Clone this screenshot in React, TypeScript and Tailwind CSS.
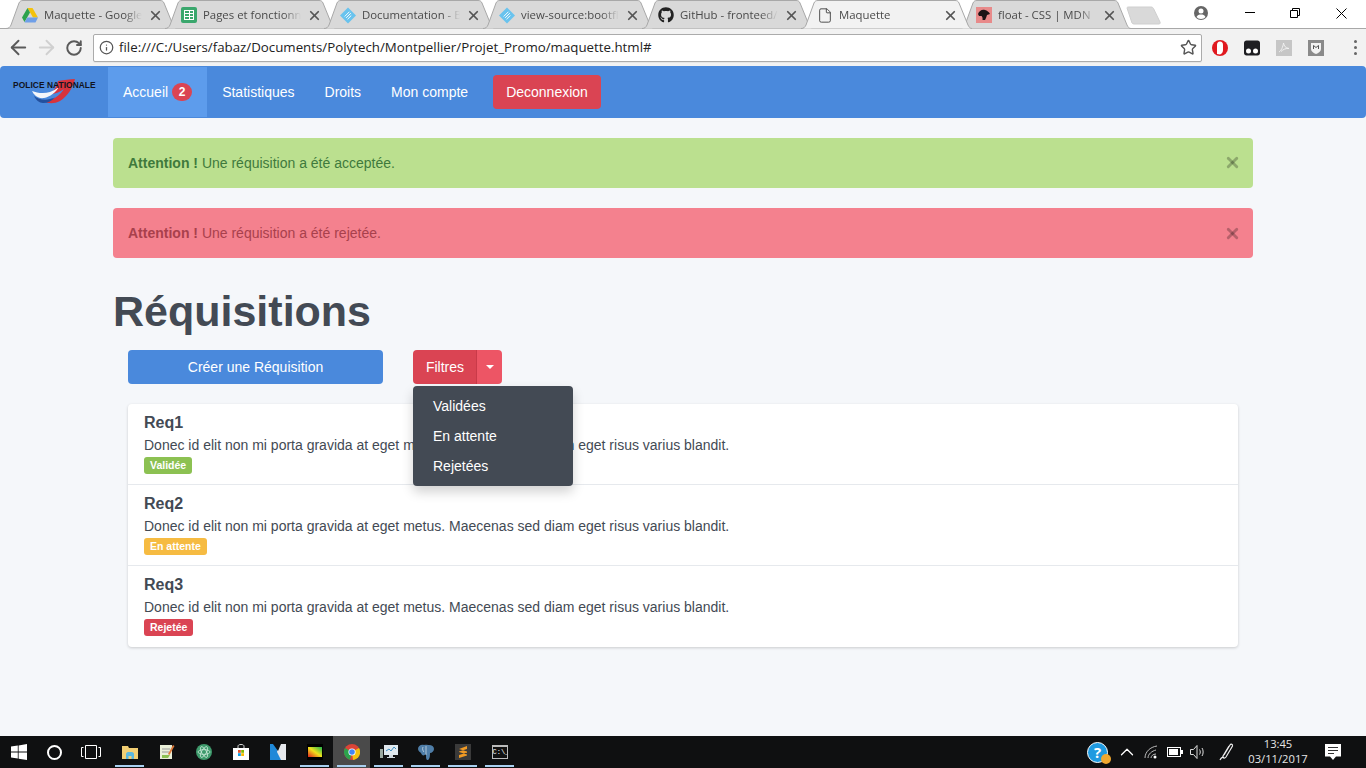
import React from 'react';
import { ArrowLeft, ArrowRight, ChevronUp, File, Info, RotateCw, Star, X } from 'lucide-react';
import { FaGithub } from 'react-icons/fa';

const DriveIcon = () => (
  <svg width="16" height="15" viewBox="0 0 16 15">
    <path d="M5.5 0h5l5.5 9.500h-5z" fill="#f4c20d" />
    <path d="M5.500 0L0 9.500l2.500 4.500L8 4.500z" fill="#2ba24c" />
    <path d="M2.500 14.500h11l2.500-5H5.300z" fill="#6f9fe8" />
  </svg>
);

const SheetsIcon = () => (
  <div className="w-4 h-4 rounded-[2px] bg-[#3aa76d] flex items-center justify-center">
    <div className="w-[10px] h-[10px] border border-white grid grid-cols-2 grid-rows-3 gap-px bg-white">
      <span className="bg-[#3aa76d]" />
      <span className="bg-[#3aa76d]" />
      <span className="bg-[#3aa76d]" />
      <span className="bg-[#3aa76d]" />
      <span className="bg-[#3aa76d]" />
      <span className="bg-[#3aa76d]" />
    </div>
  </div>
);

const DocsIcon = () => (
  <svg width="17" height="17" viewBox="0 0 17 17">
    <path d="M8.5 0L17 8.500 8.500 17 0 8.500z" fill="#69c3ee" />
    <path d="M5 9.500l5-5M6.500 11l5-5M8 12.500l4-4" stroke="#fff" strokeWidth="1" />
  </svg>
);

const MdnIcon = () => (
  <div className="w-4 h-4 bg-[#e88a8a] flex items-center justify-center">
    <svg width="14" height="14" viewBox="0 0 14 14">
      <path d="M1 6c1-3 4-5 7-4 2 .5 4 2 5 4l-3 1c-.5 2-1 3-2 5H5.500c.3-1.500 0-3-1-4L2 8z" fill="#1c1416" />
    </svg>
  </div>
);

type TabProps = { title: string; icon: React.ReactNode; active?: boolean };

const Tab: React.FC<TabProps> = ({ title, icon, active }) => (
  <div className={`relative w-[171px] h-[29px] -ml-[12px] first:ml-[6px] shrink-0 ${active ? 'z-10' : ''}`}>
    <svg className="absolute inset-0" width="171" height="29" viewBox="0 0 171 29">
      <path
        d="M0 28.500C3 28.500 4 27 5 25L13 3C14 1 15 .5 17 .5H154C156 .5 157 1 158 3L167 25C168 27 169 28.500 171 28.500"
        fill={active ? '#f2f2f2' : '#d9d9d9'}
        stroke="#a8a8a8"
      />
    </svg>
    <div className="absolute left-[16px] top-[7px] w-4 h-4 flex items-center justify-center">{icon}</div>
    <div className="absolute left-[38px] top-[6px] w-[98px] overflow-hidden whitespace-nowrap font-['Open_Sans',sans-serif] text-[11.4px] leading-[18px] text-[#4a4a4a] [mask-image:linear-gradient(to_right,black_82%,transparent)]">
      {title}
    </div>
    <X className="absolute left-[142px] top-[8px] text-[#555]" size={15} strokeWidth={2.8} />
  </div>
);

const TabStrip = () => (
  <div className="relative h-[29px] flex bg-white border-b border-[#a8a8a8] shrink-0">
    <Tab title="Maquette - Google Drive" icon={<DriveIcon />} />
    <Tab title="Pages et fonctionnalités" icon={<SheetsIcon />} />
    <Tab title="Documentation - Bootstrap" icon={<DocsIcon />} />
    <Tab title="view-source:bootflat.github" icon={<DocsIcon />} />
    <Tab title="GitHub - fronteed/icheck" icon={<FaGithub size={16} className="text-[#222]" />} />
    <Tab title="Maquette" icon={<File size={17} strokeWidth={1.4} className="text-[#444]" />} active />
    <Tab title="float - CSS | MDN" icon={<MdnIcon />} />
    <svg className="-ml-[5px] mt-[6px] shrink-0" width="36" height="19" viewBox="0 0 36 19">
      <path d="M1 2C1 1 2 1 3 1H25C26 1 27 1.500 27.500 2.500L34 16C34.500 17 34 18 33 18H8C7 18 6.500 17.500 6 17z" fill="#d9d9d9" stroke="#cfcfcf" />
    </svg>
    <div className="ml-auto flex items-start">
      <div className="w-[28px] h-[28px] flex items-center justify-center mr-[11px] -mt-px">
        <svg width="14" height="14" viewBox="0 0 14 14">
          <circle cx="7" cy="7" r="7" fill="#666" />
          <circle cx="7" cy="5" r="2.500" fill="#fff" />
          <path d="M2.500 11c1-2 2.500-2.500 4.500-2.500s3.500.5 4.500 2.500c-1 1.200-2.500 2-4.500 2s-3.500-.8-4.500-2z" fill="#fff" />
        </svg>
      </div>
      <div className="w-[48px] h-[28px] flex items-center justify-center -mt-[2px]">
        <div className="w-[10px] h-px bg-black" />
      </div>
      <div className="w-[42px] h-[28px] flex items-center justify-center -mt-px">
        <svg width="10" height="10" viewBox="0 0 10 10" fill="none" stroke="#000">
          <path d="M.5 2.500h7v7h-7zM2.500 2.500v-2h7v7h-2" />
        </svg>
      </div>
      <div className="w-[50px] h-[28px] flex items-center justify-center -mt-px">
        <svg width="11" height="11" viewBox="0 0 11 11" stroke="#000">
          <path d="M.5.500l10 10M10.500.5l-10 10" />
        </svg>
      </div>
    </div>
  </div>
);

const Toolbar = () => (
  <div className="h-[37px] bg-[#f2f2f2] flex items-center shrink-0">
    <div className="w-[93px] flex items-center pl-[4px]">
      <div className="w-[28px] flex justify-center">
        <ArrowLeft size={23} strokeWidth={2} className="text-[#5a5a5a]" />
      </div>
      <div className="w-[28px] flex justify-center">
        <ArrowRight size={23} strokeWidth={2} className="text-[#d0d0d0]" />
      </div>
      <div className="w-[28px] flex justify-center">
        <RotateCw size={18} strokeWidth={2.6} className="text-[#5a5a5a]" />
      </div>
    </div>
    <div className="w-[1109px] h-[28px] bg-white border border-[#ababab] rounded-[2px] flex items-center shadow-[0_1px_0_#e6e6e6]">
      <Info size={15} strokeWidth={2} className="ml-[5px] text-[#555]" />
      <span className="ml-[5px] font-['Open_Sans',sans-serif] text-[13.3px] text-[#222] whitespace-nowrap">
        file:///C:/Users/fabaz/Documents/Polytech/Montpellier/Projet_Promo/maquette.html#
      </span>
      <Star size={17} strokeWidth={2} className="ml-auto mr-[4px] text-[#555]" />
    </div>
    <div className="flex-1 flex items-center pl-[10px] gap-[16px]">
      <svg width="16" height="16" viewBox="0 0 16 16">
        <circle cx="8" cy="8" r="8" fill="#e0191f" />
        <path d="M5 14V5c0-2 1-3.500 3-3.500S11 3 11 5v5c0 2-1 4-3 4.500z" fill="#fff" />
      </svg>
      <svg width="16" height="16" viewBox="0 0 16 16">
        <path d="M0 3c0-1.500 1-2.500 2.500-2.500h11C15 .5 16 1.500 16 3v10c0 1.500-1 2.500-2.500 2.500h-11C1 15.500 0 14.500 0 13z" fill="#1e1e22" />
        <circle cx="4.500" cy="11" r="2.500" fill="#fff" />
        <circle cx="11.500" cy="11" r="2.500" fill="#fff" />
      </svg>
      <svg width="16" height="16" viewBox="0 0 16 16">
        <rect width="16" height="16" fill="#c6c6c6" />
        <path d="M3 12c2-1 4-5 4.500-9 .5 3 2 5 5.500 5.500-3-.5-6 1-8 3" fill="none" stroke="#f2f2f2" strokeWidth="1" />
      </svg>
      <svg width="16" height="16" viewBox="0 0 16 16">
        <rect width="16" height="16" fill="#8a8a8a" />
        <path d="M3 3h10v6c0 2.500-2.500 4-5 5-2.500-1-5-2.500-5-5z" fill="#f2f2f2" />
        <path d="M5.500 9V5.500L8 7.500l2.500-2V9" fill="none" stroke="#555" strokeWidth="1" />
      </svg>
      <div className="flex flex-col gap-[3px] ml-[14px]">
        <span className="w-[3px] h-[3px] rounded-full bg-[#666]" />
        <span className="w-[3px] h-[3px] rounded-full bg-[#666]" />
        <span className="w-[3px] h-[3px] rounded-full bg-[#666]" />
      </div>
    </div>
  </div>
);

const Logo = () => (
  <div className="relative w-[108px] h-[52px] shrink-0">
    <svg className="absolute left-[30px] top-[13px]" width="46" height="25" viewBox="0 0 46 25">
      <path d="M28 2c6-1 12-2 17-2-2 8-7 17-15 22-6 3-12 3-16 0 9 0 16-6 20-12-4 3-9 5-14 5 4-3 7-8 8-13z" fill="#d8333c" />
      <path d="M2 12c5 2 12 3 18 1 3-1 6-3 9-5-3 5-9 10-15 11-6 1-10-3-12-7z" fill="#f4f6fa" />
      <path d="M4 17c4 3 10 5 16 3 2-.5 4-1 5-2-3 4-7 6-12 6-4 0-7-3-9-7z" fill="#23509e" />
    </svg>
    <span className="absolute left-[13px] top-[14px] font-['Liberation_Sans',sans-serif] font-bold text-[8.4px] leading-[10px] tracking-[0.06px] whitespace-nowrap text-[#10131c]">
      POLICE NATIONALE
    </span>
  </div>
);

const NavLink: React.FC<{ children: React.ReactNode; active?: boolean }> = ({ children, active }) => (
  <a href="#" className={`h-[50px] flex items-center px-[15px] text-white ${active ? 'bg-[#5d9cec]' : ''}`}>
    {children}
  </a>
);

const Navbar = () => (
  <nav className="h-[52px] bg-[#4a89dc] rounded-[4px] flex items-center shrink-0">
    <Logo />
    <NavLink active>
      Accueil
      <span className="ml-[4px] w-[20px] h-[18px] rounded-full bg-[#da4453] text-[12px] font-bold leading-[18px] text-center">2</span>
    </NavLink>
    <NavLink>Statistiques</NavLink>
    <NavLink>Droits</NavLink>
    <NavLink>Mon compte</NavLink>
    <button className="ml-[10px] h-[34px] px-[13px] rounded-[4px] bg-[#da4453] text-white">Deconnexion</button>
  </nav>
);

const Alert: React.FC<{ className: string; message: string; closeClass: string }> = ({ className, message, closeClass }) => (
  <div className={`h-[50px] mb-[20px] rounded-[4px] flex items-center justify-between pl-[15px] pr-[12px] ${className}`}>
    <p>
      <strong>Attention !</strong> {message}
    </p>
    <X size={17} strokeWidth={4} className={closeClass} />
  </div>
);

const badges = {
  ok: 'bg-[#8cc152]',
  wait: 'bg-[#f6bb42]',
  no: 'bg-[#da4453]',
};

const requisitions = [
  { name: 'Req1', status: 'Validée', color: badges.ok },
  { name: 'Req2', status: 'En attente', color: badges.wait },
  { name: 'Req3', status: 'Rejetée', color: badges.no },
];

const RequisitionList = () => (
  <div className="mt-[20px] bg-white rounded-[4px] shadow-[0_1px_3px_rgba(0,0,0,0.18)] divide-y divide-[#e6e9ed]">
    {requisitions.map((r) => (
      <div key={r.name} className="h-[81px] px-[16px] pt-[10px]">
        <h4 className="text-[16px] font-bold leading-[18px]">{r.name}</h4>
        <p className="mt-[3px] leading-[20px]">Donec id elit non mi porta gravida at eget metus. Maecenas sed diam eget risus varius blandit.</p>
        <span className={`block w-fit mt-[2px] h-[17px] px-[6px] rounded-[3px] text-white text-[10.5px] font-bold leading-[17px] ${r.color}`}>
          {r.status}
        </span>
      </div>
    ))}
  </div>
);

const FilterDropdown = () => (
  <div className="relative ml-[30px] flex">
    <button className="w-[64px] h-[34px] rounded-l-[4px] bg-[#da4453] text-white">Filtres</button>
    <button className="-ml-px w-[26px] h-[34px] rounded-r-[4px] bg-[#ed5565] border-l border-[#c93a49] flex items-center justify-center">
      <span className="border-x-[4px] border-x-transparent border-t-[4px] border-t-white" />
    </button>
    <div className="absolute z-20 left-0 top-[36px] w-[160px] h-[100px] py-[5px] rounded-[4px] bg-[#434a54] text-white shadow-[0_6px_12px_rgba(0,0,0,0.18)]">
      <div className="h-[30px] pl-[20px] leading-[30px]">Validées</div>
      <div className="h-[30px] pl-[20px] leading-[30px]">En attente</div>
      <div className="h-[30px] pl-[20px] leading-[30px]">Rejetées</div>
    </div>
  </div>
);

const Content = () => (
  <main className="w-[1140px] mx-auto pt-[20px] flex-1">
    <Alert className="bg-[#bbe08f] text-[#3f7a3c]" closeClass="text-black/25 -mt-[2px]" message="Une réquisition a été acceptée." />
    <Alert className="bg-[#f4818e] text-[#a8404c]" closeClass="text-black/25" message="Une réquisition a été rejetée." />
    <h1 className="text-[43px] font-bold leading-[48px] mt-[29px] mb-[15px]">Réquisitions</h1>
    <div className="px-[15px]">
      <div className="flex">
        <button className="w-[255px] h-[34px] rounded-[4px] bg-[#4a89dc] text-white">Créer une Réquisition</button>
        <FilterDropdown />
      </div>
      <RequisitionList />
    </div>
  </main>
);

const TaskSlot: React.FC<{ children: React.ReactNode; running?: boolean; current?: boolean }> = ({ children, running, current }) => (
  <div className={`relative w-[37px] h-[32px] flex items-center justify-center ${current ? 'bg-[#4a4a4a]' : ''}`}>
    {children}
    {running && <span className="absolute left-[4px] right-[4px] bottom-[1px] h-[2px] bg-[#a8d0f0]" />}
  </div>
);

const Taskbar = () => (
  <footer className="h-[32px] bg-[#0f1011] flex items-center shrink-0 font-['Open_Sans',sans-serif] text-[#e6e6e6]">
    <TaskSlot>
      <svg width="16" height="16" viewBox="0 0 16 16" fill="#fff">
        <path d="M0 2.500l6.800-1v6H0zM7.600 1.400L16 0v7.500H7.600zM0 8.400h6.800v6.100l-6.800-1zM7.600 8.400H16V16l-8.400-1.200z" />
      </svg>
    </TaskSlot>
    <TaskSlot>
      <div className="-ml-[2px] w-[15px] h-[15px] rounded-full border-[2px] border-white" />
    </TaskSlot>
    <TaskSlot>
      <svg className="-ml-[4px]" width="20" height="14" viewBox="0 0 20 14" fill="none" stroke="#fff">
        <path d="M4.500 .5h11v13h-11zM2.500 2.500H.5v9h2M17.500 2.500h2v9h-2" />
      </svg>
    </TaskSlot>
    <TaskSlot running>
      <svg width="16" height="15" viewBox="0 0 16 15">
        <path d="M0 1h6l1 2h9v11H0z" fill="#f2cf74" />
        <path d="M4 14V9c0-1 1-2 2-2h4c1 0 2 1 2 2v5H9.500v-3h-3v3z" fill="#5cb8de" />
      </svg>
    </TaskSlot>
    <TaskSlot>
      <svg width="16" height="16" viewBox="0 0 16 16">
        <path d="M1 1h12v14H1z" fill="#e9efd8" />
        <path d="M3 5h8M3 8h7" stroke="#999" />
        <path d="M3 11h8L9 14H3z" fill="#8cc152" />
        <path d="M9 10l5-9 1.500 1-5 9z" fill="#e07a3a" />
      </svg>
    </TaskSlot>
    <TaskSlot>
      <svg width="16" height="16" viewBox="0 0 16 16" fill="none">
        <circle cx="8" cy="8" r="8" fill="#3e9a6c" />
        <ellipse cx="8" cy="8" rx="6" ry="2.400" stroke="#d6efe2" strokeWidth=".7" />
        <ellipse cx="8" cy="8" rx="6" ry="2.400" stroke="#d6efe2" strokeWidth=".7" transform="rotate(60 8 8)" />
        <ellipse cx="8" cy="8" rx="6" ry="2.400" stroke="#d6efe2" strokeWidth=".7" transform="rotate(120 8 8)" />
      </svg>
    </TaskSlot>
    <TaskSlot>
      <svg width="16" height="16" viewBox="0 0 16 16">
        <path d="M5 4V2.500C5 1 6 .5 8 .5s3 .5 3 2V4" fill="none" stroke="#ddd" />
        <rect y="4" width="16" height="12" fill="#fff" />
        <rect x="5" y="6" width="2.800" height="2.800" fill="#e2532d" />
        <rect x="8.200" y="6" width="2.800" height="2.800" fill="#7eb900" />
        <rect x="5" y="9.200" width="2.800" height="2.800" fill="#0a9fe8" />
        <rect x="8.200" y="9.200" width="2.800" height="2.800" fill="#fdb900" />
      </svg>
    </TaskSlot>
    <TaskSlot>
      <svg width="16" height="16" viewBox="0 0 16 16">
        <rect width="16" height="16" fill="#1e88d8" />
        <path d="M9 0h7v16h-5L7 8z" fill="#e6e9ed" />
        <path d="M3 0l5 7 3-7z" fill="#0f1011" />
      </svg>
    </TaskSlot>
    <TaskSlot running>
      <svg width="16" height="16" viewBox="0 0 16 16">
        <defs>
          <linearGradient id="spectrum" x1="0" y1="1" x2="1" y2="0">
            <stop offset="0" stopColor="#e0201c" />
            <stop offset=".5" stopColor="#f2e21c" />
            <stop offset="1" stopColor="#1cb44c" />
          </linearGradient>
        </defs>
        <rect width="16" height="16" fill="#000" />
        <rect x="1" y="3" width="14" height="10" fill="url(#spectrum)" />
      </svg>
    </TaskSlot>
    <TaskSlot running current>
      <svg width="16" height="16" viewBox="0 0 16 16">
        <circle cx="8" cy="8" r="8" fill="#db4437" />
        <path d="M8 8L1.100 4A8 8 0 0 0 6 15.800z" fill="#2ba24c" />
        <path d="M8 8l1 8A8 8 0 0 0 15 4z" fill="#f4c20d" />
        <circle cx="8" cy="8" r="3.600" fill="#fff" />
        <circle cx="8" cy="8" r="2.800" fill="#4285f4" />
      </svg>
    </TaskSlot>
    <TaskSlot running>
      <svg width="18" height="16" viewBox="0 0 18 16">
        <rect x="4" y="1" width="14" height="10" fill="#dfe8ee" />
        <path d="M6 7l3-2 2 2 3-4 2 2" fill="none" stroke="#3a8cc0" />
        <path d="M9 11h4v2h2v1H7v-1h2z" fill="#cfd8de" />
        <rect y="5" width="3" height="9" fill="#9aa8a0" />
      </svg>
    </TaskSlot>
    <TaskSlot running>
      <svg width="16" height="17" viewBox="0 0 16 17">
        <path d="M0 5c0-3 3-5 6-4 1-.5 3-.5 4 0 3-.5 6 1 6 4 0 2-2 4-4 4 0 2 0 6-2 7-2 0-2-2-2-6-2 2-4 2-5-1C2 8 0 7 0 5z" fill="#4f7ea8" />
        <path d="M8 2v9M5 3c-1 2 0 4 1 5" fill="none" stroke="#dbe5ee" strokeWidth=".7" />
      </svg>
    </TaskSlot>
    <TaskSlot running>
      <div className="w-[16px] h-[16px] bg-[#3a3a3a] flex items-center justify-center">
        <svg width="10" height="12" viewBox="0 0 10 12">
          <path d="M9 0v3L1 5.500V3zM1 6l8 2.500v-3L1 3zM9 6.500v3L1 12V9z" fill="#f09a24" />
        </svg>
      </div>
    </TaskSlot>
    <TaskSlot running>
      <div className="w-[16px] h-[14px] bg-[#111] border border-[#bbb] border-t-[2px] font-['Liberation_Mono',monospace] text-[7px] leading-[10px] text-white text-center overflow-hidden">
        C:\_
      </div>
    </TaskSlot>
    <div className="ml-auto flex items-center h-full">
      <div className="relative w-[21px] h-[21px] rounded-full bg-[#1f9ae0] border border-white text-white font-bold text-[15px] leading-[19px] text-center">
        ?
        <span className="absolute -right-[4px] -bottom-[2px] w-[10px] h-[10px] rounded-full bg-[#f0a830]" />
      </div>
      <ChevronUp size={22} strokeWidth={1.4} className="ml-[8px] text-white" />
      <svg className="ml-[6px]" width="14" height="14" viewBox="0 0 14 14" fill="none" stroke="#bbb">
        <path d="M1 13C1 7 6 2 13 1M4 13c0-4 4-7 8-8M7 13c0-2 2-4 5-4" />
        <circle cx="11" cy="12" r="1.500" fill="#fff" stroke="none" />
      </svg>
      <svg className="ml-[9px]" width="16" height="10" viewBox="0 0 16 10">
        <rect x=".5" y=".5" width="13" height="9" fill="none" stroke="#fff" />
        <rect x="2" y="2" width="9" height="6" fill="#fff" />
        <rect x="14" y="3" width="2" height="4" fill="#fff" />
      </svg>
      <svg className="ml-[7px]" width="16" height="14" viewBox="0 0 16 14" fill="none" stroke="#ddd">
        <path d="M.5 4.500h3l3.500-4v13l-3.500-4h-3zM9.500 4.500c1 1.500 1 3.500 0 5M12 3c1.500 2 1.500 6 0 8" />
      </svg>
      <svg className="ml-[13px]" width="16" height="18" viewBox="0 0 16 18" fill="none" stroke="#eee" strokeWidth="1.200">
        <path d="M5 12L11 2c1-1.500 3-.5 2.500 1L7 14c-1.500 2-4 1-3-1l6-10M1 17c1-2 3-4 4-2" />
      </svg>
      <div className="w-[72px] ml-[7px] -mt-[2px] text-center text-[11.2px] leading-[15px]">
        <div>13:45</div>
        <div>03/11/2017</div>
      </div>
      <div className="w-[30px] flex justify-center ml-[4px] mr-[18px]">
        <svg width="16" height="17" viewBox="0 0 16 17">
          <path d="M0 0h16v12.500h-5L8 16l-3-3.500H0z" fill="#fff" />
          <path d="M3 3.500h10M3 6.500h10M3 9.500h6" stroke="#333" />
        </svg>
      </div>
    </div>
  </footer>
);

export default function App() {
  return (
    <div className="h-screen overflow-hidden flex flex-col bg-[#f5f7fa] font-['Liberation_Sans',Arial,sans-serif] text-[14px] text-[#434a54]">
      <TabStrip />
      <Toolbar />
      <Navbar />
      <Content />
      <Taskbar />
    </div>
  );
}
